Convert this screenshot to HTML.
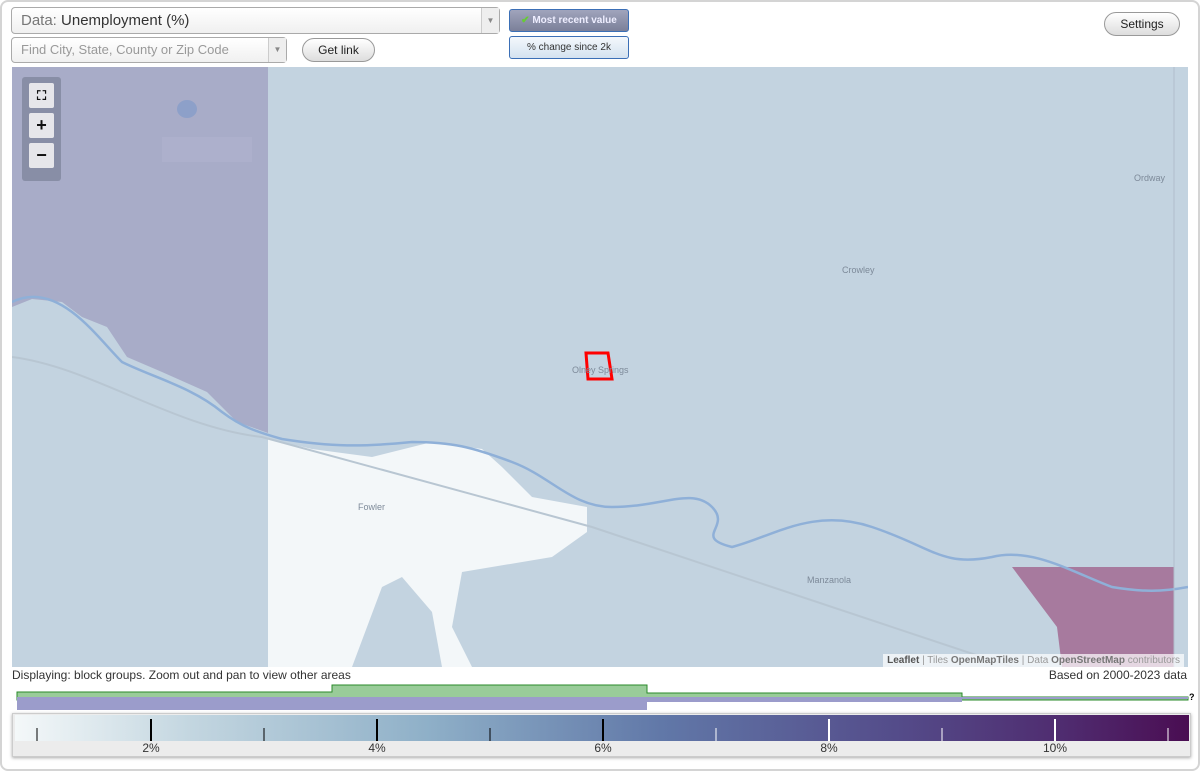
<!DOCTYPE html>
<html><head><meta charset="utf-8"><style>
*{box-sizing:border-box;margin:0;padding:0}
body{width:1200px;height:771px;background:#fff;font-family:"Liberation Sans",sans-serif;position:relative;overflow:hidden}
.frame{position:absolute;left:0;top:0;width:1200px;height:771px;border:2px solid #d4d4d4;border-radius:8px}
.sel{position:absolute;background:linear-gradient(#fff,#f0f0f0);border:1px solid #aaa;border-radius:4px;color:#333}
.sel .arr{position:absolute;right:0;top:0;bottom:0;width:18px;border-left:1px solid #ccc;background:#eee;color:#888;font-size:8px;text-align:center}
.btn{position:absolute;background:linear-gradient(#fff,#ddd);border:1px solid #999;border-radius:12px;font-size:12px;color:#222;text-align:center}
.tog{position:absolute;border:1px solid #3b6fb6;border-radius:3px;font-size:10px;text-align:center}
.map{position:absolute;left:12px;top:67px;width:1176px;height:600px;background:#c3d3e0;overflow:hidden}
.zc{position:absolute;left:10px;top:10px;width:39px;height:104px;background:#888ea6;border-radius:3px}
.zc div{position:absolute;left:7px;width:25px;height:25px;background:#e6e6ea;border-radius:2px;font-weight:bold;text-align:center;line-height:25px;font-size:18px;color:#111}
.lbl{position:absolute;font-size:9px;color:#7d8a99}
</style></head><body>
<div class="frame"></div>
<div class="sel" style="left:11px;top:7px;width:489px;height:27px;font-size:15px;line-height:25px;padding-left:9px"><span style="color:#777">Data:</span> Unemployment (%)<div class="arr" style="line-height:25px">▼</div></div>
<div class="sel" style="left:11px;top:37px;width:276px;height:26px;font-size:13px;line-height:24px;padding-left:9px;color:#999">Find City, State, County or Zip Code<div class="arr" style="line-height:24px">▼</div></div>
<div class="btn" style="left:302px;top:38px;width:73px;height:24px;line-height:22px">Get link</div>
<div class="btn" style="left:1104px;top:12px;width:76px;height:24px;line-height:22px">Settings</div>
<div class="tog" style="left:509px;top:9px;width:120px;height:23px;line-height:21px;background:linear-gradient(#a0a4bc,#7b8099);color:#eef;font-weight:bold"><span style="color:#6c3">✔</span> Most recent value</div>
<div class="tog" style="left:509px;top:36px;width:120px;height:23px;line-height:21px;background:linear-gradient(#f4f8fc,#d4e2f0);color:#333">% change since 2k</div>

<div class="map">
<svg width="1176" height="600" style="position:absolute;left:0;top:0">
<path d="M0 0 H256 V366 L225 355 L195 325 L150 305 L115 290 L95 260 L70 250 L50 235 L20 232 L0 240 Z" fill="#a8acc8"/>
<path d="M256 372 L300 382 L360 390 L420 375 L470 382 L490 400 L520 430 L575 440 L575 465 L540 490 L450 505 L440 560 L460 600 L430 600 L420 545 L390 510 L370 520 L340 600 L256 600 Z" fill="#f3f7f9"/>
<path d="M1000 500 H1162 V600 H1050 L1045 560 Z" fill="#a77a9e"/>
<rect x="150" y="70" width="90" height="25" fill="#b0b2cf" opacity=".6"/>
<ellipse cx="175" cy="42" rx="10" ry="9" fill="#8da0c9"/>
<path d="M0 235 C20 225 40 230 60 245 C80 260 95 280 110 295 C140 310 180 320 210 345 C230 360 245 365 270 372 C320 380 350 380 400 375 C440 375 460 380 500 395 C540 410 560 440 600 440 C650 440 680 420 700 440 C720 460 680 470 720 480 C760 470 800 440 860 460 C920 480 930 500 980 490 C1020 480 1060 505 1100 520 C1130 525 1150 525 1176 520" fill="none" stroke="#8fb0d8" stroke-width="2.5"/>
<path d="M0 290 C80 300 160 360 250 370 L580 460 L1000 600" fill="none" stroke="#b8c6d2" stroke-width="2"/>
<path d="M574 286 L596 286 L600 312 L576 312 Z" fill="none" stroke="red" stroke-width="3"/>
<line x1="1162" y1="0" x2="1162" y2="600" stroke="#b0bccb"/>
</svg>
<div class="zc"><div style="top:6px;font-size:13px">⛶</div><div style="top:36px">+</div><div style="top:66px">−</div></div>
<div class="lbl" style="left:1122px;top:106px">Ordway</div>
<div class="lbl" style="left:830px;top:198px">Crowley</div>
<div class="lbl" style="left:560px;top:298px">Olney Springs</div>
<div class="lbl" style="left:346px;top:435px">Fowler</div>
<div class="lbl" style="left:795px;top:508px">Manzanola</div>
<div style="position:absolute;right:4px;bottom:0;background:rgba(255,255,255,.7);font-size:10px;color:#999;padding:1px 4px"><b style="color:#555">Leaflet</b> | Tiles <b style="color:#777">OpenMapTiles</b> | Data <b style="color:#777">OpenStreetMap</b> contributors</div>
</div>
<div style="position:absolute;left:12px;top:668px;font-size:12px;color:#333">Displaying: block groups. Zoom out and pan to view other areas</div>
<div style="position:absolute;right:13px;top:668px;font-size:12px;color:#333">Based on 2000-2023 data</div>
<svg width="1200" height="30" style="position:absolute;left:0;top:684px">
<path d="M17 8 H332 V1 H647 V9 H962 V13 H1188 V16 H17Z" fill="#99cc99" stroke="#2a8a2a" stroke-width="1"/>
<rect x="17" y="13" width="630" height="13" fill="#9b9ccb"/>
<rect x="647" y="13" width="315" height="5" fill="#9b9ccb"/>
<rect x="962" y="13" width="226" height="2" fill="#9b9ccb"/>
<text x="1189" y="16" font-size="9" font-family="Liberation Sans" font-weight="bold">?</text>
</svg>
<div style="position:absolute;left:12px;top:713px;width:1179px;height:44px;background:#ececec;border:1px solid #ccc;box-shadow:0 1px 3px #aaa">
<div style="position:absolute;left:2px;top:1px;width:1174px;height:26px;background:linear-gradient(90deg,#f4f8f9,#c3d6e0 15%,#8fb0c8 35%,#6178a8 55%,#544c8a 75%,#4f2a6e 90%,#4a0d52)"></div>
<svg width="1179" height="44" style="position:absolute;left:0;top:0">
<g stroke="#000"><line x1="24" y1="14" x2="24" y2="27"/><line x1="138" y1="5" x2="138" y2="27" stroke-width="2"/><line x1="251" y1="14" x2="251" y2="27"/><line x1="364" y1="5" x2="364" y2="27" stroke-width="2"/><line x1="477" y1="14" x2="477" y2="27"/><line x1="590" y1="5" x2="590" y2="27" stroke-width="2"/></g>
<g stroke="#fff"><line x1="703" y1="14" x2="703" y2="27"/><line x1="816" y1="5" x2="816" y2="27" stroke-width="2"/><line x1="929" y1="14" x2="929" y2="27"/><line x1="1042" y1="5" x2="1042" y2="27" stroke-width="2"/><line x1="1155" y1="14" x2="1155" y2="27"/></g>
<g font-size="12" fill="#333" font-family="Liberation Sans" text-anchor="middle"><text x="138" y="38">2%</text><text x="364" y="38">4%</text><text x="590" y="38">6%</text><text x="816" y="38">8%</text><text x="1042" y="38">10%</text></g>
</svg></div>
</body></html>
